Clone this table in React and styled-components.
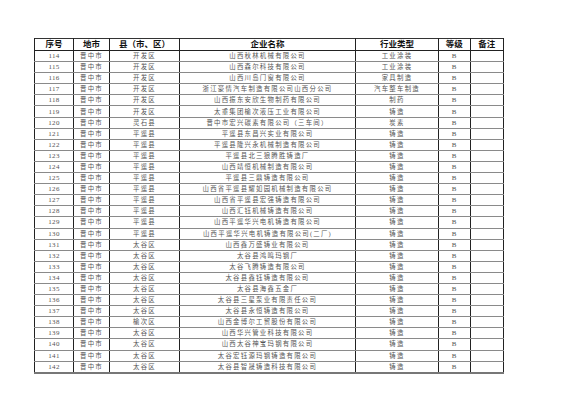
import React from "react";
import styled, { createGlobalStyle } from "styled-components";

const Global = createGlobalStyle`
  html, body { margin: 0; padding: 0; background: #fff; }
  body { width: 585px; height: 413px; overflow: hidden; }
`;

const Page = styled.div`
  padding: 38px 0 0 34px;
`;

const Table = styled.table`
  width: 469px;
  table-layout: fixed;
  border-collapse: collapse;
  border-top: 1.5px solid #333;
  border-left: 1.5px solid #222;
  border-right: 1.5px solid #666;
  border-bottom: 2px solid #777;
  font-family: "Liberation Serif", "Noto Sans CJK SC", serif;
`;

const HeadCell = styled.th`
  height: 11px;
  padding: 0;
  font-size: 8.5px;
  font-weight: 700;
  color: #111;
  text-align: center;
  line-height: 11px;
  border-left: 1px solid #222;
  border-right: 1px solid #222;
  border-bottom: 1px solid #222;
  white-space: nowrap;
  overflow: hidden;
`;

const Row = styled.tr`
  height: 11.1px;
`;

const Cell = styled.td`
  padding: 0;
  font-size: ${(p) => (p.$num ? "7px" : "6.4px")};
  letter-spacing: ${(p) => (p.$num ? "0.3px" : "1.25px")};
  color: #555;
  text-align: center;
  line-height: 10px;
  border-left: 1px solid #222;
  border-right: 1px solid #222;
  border-bottom: 1px solid #8a8a8a;
  white-space: nowrap;
  overflow: hidden;
`;

const rows = [
  ["114", "开发区", "山西秋林机械有限公司", "工业涂装"],
  ["115", "开发区", "山西森尔科技有限公司", "工业涂装"],
  ["116", "开发区", "山西川岛门窗有限公司", "家具制造"],
  ["117", "开发区", "浙江豪情汽车制造有限公司山西分公司", "汽车整车制造"],
  ["118", "开发区", "山西振东安欣生物制药有限公司", "制药"],
  ["119", "开发区", "太重集团榆次液压工业有限公司", "铸造"],
  ["120", "灵石县", "晋中市宏兴碳素有限公司（三车间）", "炭素"],
  ["121", "平遥县", "平遥县东昌兴实业有限公司", "铸造"],
  ["122", "平遥县", "平遥县隆兴永机械制造有限公司", "铸造"],
  ["123", "平遥县", "平遥县北三狼腾胜铸造厂", "铸造"],
  ["124", "平遥县", "山西靖恒机械制造有限公司", "铸造"],
  ["125", "平遥县", "平遥县三鼎铸造有限公司", "铸造"],
  ["126", "平遥县", "山西省平遥县耀如园机械制造有限公司", "铸造"],
  ["127", "平遥县", "山西省平遥县宏强铸造有限公司", "铸造"],
  ["128", "平遥县", "山西汇钰机械铸造有限公司", "铸造"],
  ["129", "平遥县", "山西平遥华兴电机铸造有限公司", "铸造"],
  ["130", "平遥县", "山西平遥华兴电机铸造有限公司(二厂)", "铸造"],
  ["131", "太谷区", "山西鑫万盛铸业有限公司", "铸造"],
  ["132", "太谷区", "太谷县鸿鸣玛钢厂", "铸造"],
  ["133", "太谷区", "太谷飞腾铸造有限公司", "铸造"],
  ["134", "太谷区", "太谷县鑫钰铸造有限公司", "铸造"],
  ["135", "太谷区", "太谷县海鑫五金厂", "铸造"],
  ["136", "太谷区", "太谷县三星泵业有限责任公司", "铸造"],
  ["137", "太谷区", "太谷县永恒铸造有限公司", "铸造"],
  ["138", "榆次区", "山西金博尔工贸股份有限公司", "铸造"],
  ["139", "太谷区", "山西华兴管业科技有限公司", "铸造"],
  ["140", "太谷区", "山西太谷神宝玛钢有限公司", "铸造"],
  ["141", "太谷区", "太谷宏钰源玛钢铸造有限公司", "铸造"],
  ["142", "太谷区", "太谷县智晟铸造科技有限公司", "铸造"],
];

const widths = [39, 36, 70, 176, 83, 31.5, 33.5];
const heads = ["序号", "地市", "县（市、区）", "企业名称", "行业类型", "等级", "备注"];

export default function App() {
  return (
    <Page>
      <Global />
      <Table>
        <colgroup>
          {widths.map((w, i) => (
            <col key={i} style={{ width: `${w}px` }} />
          ))}
        </colgroup>
        <thead>
          <tr>
            {heads.map((h) => (
              <HeadCell key={h}>{h}</HeadCell>
            ))}
          </tr>
        </thead>
        <tbody>
          {rows.map(([n, county, name, type]) => (
            <Row key={n}>
              <Cell $num>{n}</Cell>
              <Cell>晋中市</Cell>
              <Cell>{county}</Cell>
              <Cell>{name}</Cell>
              <Cell>{type}</Cell>
              <Cell $num>B</Cell>
              <Cell />
            </Row>
          ))}
        </tbody>
      </Table>
    </Page>
  );
}
